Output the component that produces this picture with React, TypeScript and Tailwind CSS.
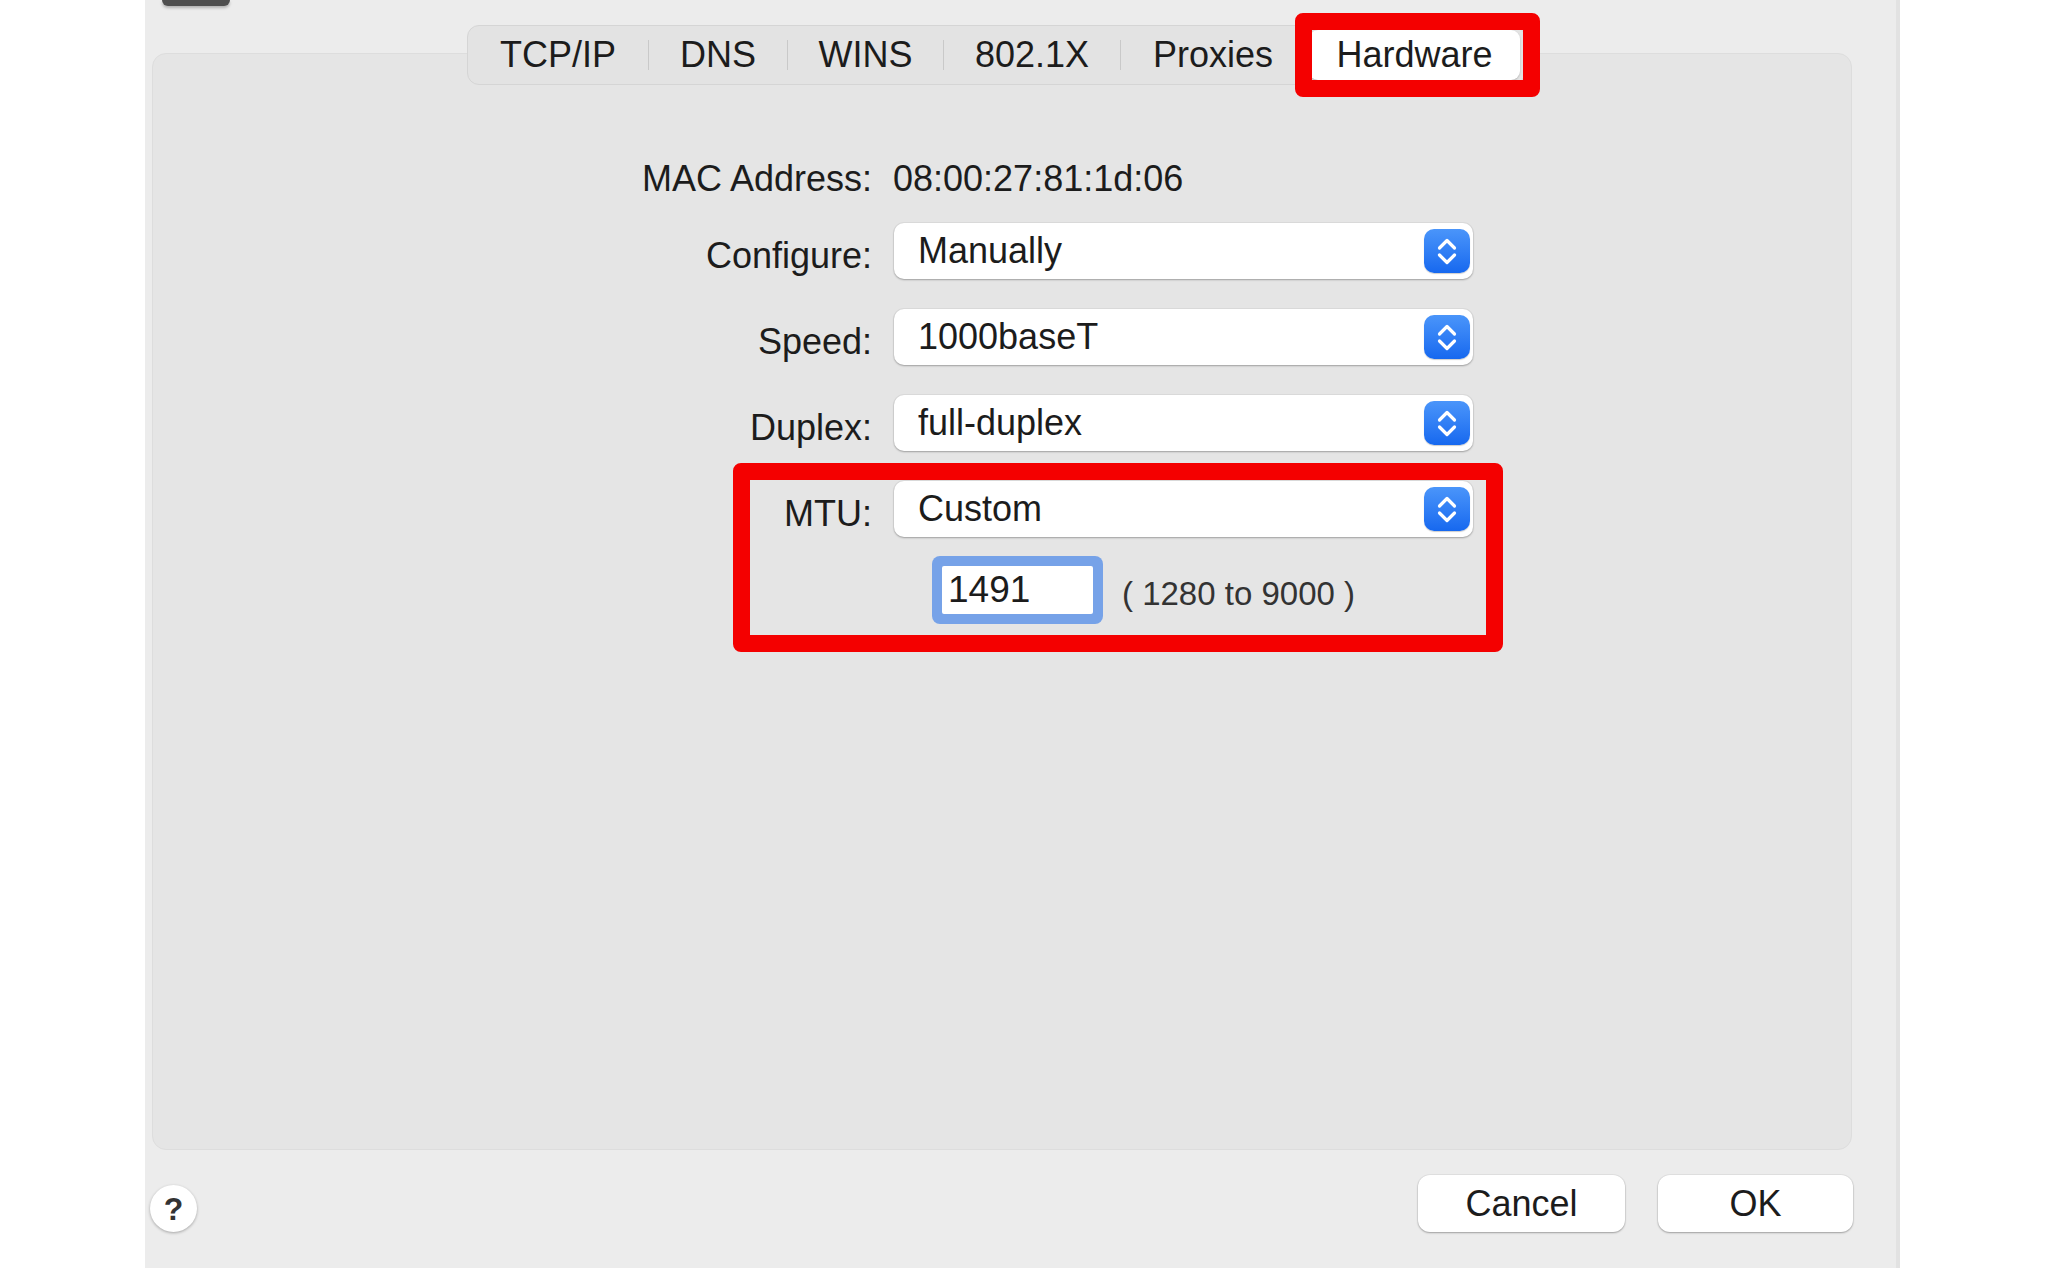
import React from 'react';

const tabs = [
  { label: 'TCP/IP', w: 'w-[180px]' },
  { label: 'DNS', w: 'w-[138px]' },
  { label: 'WINS', w: 'w-[155px]' },
  { label: '802.1X', w: 'w-[176px]' },
  { label: 'Proxies', w: 'w-[184px]' },
];

function Stepper() {
  return (
    <div className="flex h-[44px] w-[46px] items-center justify-center rounded-[10px] bg-gradient-to-b from-[#4a95fa] to-[#1668ef] shadow-[0_1px_1px_rgba(0,0,0,0.2)]">
      <svg width="46" height="44" viewBox="0 0 46 44" fill="none">
        <path d="M15.5 19 L23 11.5 L30.5 19" stroke="white" strokeWidth="3.2" strokeLinecap="round" strokeLinejoin="round" />
        <path d="M15.5 26 L23 33.5 L30.5 26" stroke="white" strokeWidth="3.2" strokeLinecap="round" strokeLinejoin="round" />
      </svg>
    </div>
  );
}

function PopupRow({ label, value, first }: { label: string; value: string; first?: boolean }) {
  return (
    <div className={`flex h-[56px] items-center ${first ? 'mt-[22px]' : 'mt-[30px]'}`}>
      <div className="mt-[10px] w-[719px] text-right leading-[44px]">{label}</div>
      <div className="ml-[22px] flex h-[56px] w-[579px] items-center justify-between rounded-[10px] bg-white pl-[24px] pr-[3px] leading-[44px] shadow-[0_1px_2px_rgba(0,0,0,0.28),0_0_0_1px_rgba(0,0,0,0.04)]">
        <span>{value}</span>
        <Stepper />
      </div>
    </div>
  );
}

export default function App() {
  return (
    <div
      className="h-[1268px] w-full overflow-hidden bg-white text-[36px] leading-[44px] text-[#1c1c1c]"
      style={{ fontFamily: '"Liberation Sans", Arial, sans-serif' }}
    >
      <div className="relative ml-[145px] flex h-[1268px] w-[1755px] flex-col border-r-[4px] border-[#e2e2e2] bg-[#ececec] pl-[7px] pt-[53px]">
        {/* bit of a control sticking out above */}
        <div className="absolute left-[17px] top-0 h-[6px] w-[68px] rounded-b-[8px] bg-[#4f4f4f] shadow-[0_2px_3px_rgba(0,0,0,0.25)]" />

        {/* main panel */}
        <div className="flex h-[1097px] w-[1700px] flex-col rounded-[14px] border border-[#dddddd] bg-[#e5e5e5]">
          {/* segmented tabs */}
          <div className="relative z-10 -mt-[29px] ml-[314px] flex h-[60px] w-[1058px] items-center rounded-[12px] border border-[#d5d5d5] bg-[#e3e3e3]">
            {tabs.map((t, i) => (
              <React.Fragment key={t.label}>
                {i > 0 && <div className="h-[30px] w-px bg-[#c9c9c9]" />}
                <div className={`${t.w} text-center leading-[58px]`}>{t.label}</div>
              </React.Fragment>
            ))}
            <div className="flex h-full flex-1 p-[4px]">
              <div className="flex flex-1 items-center justify-center rounded-[9px] bg-white shadow-[0_1px_2px_rgba(0,0,0,0.2)]">
                Hardware
              </div>
            </div>
          </div>

          {/* MAC */}
          <div className="mt-[72px] flex h-[44px] items-center">
            <div className="w-[719px] text-right">MAC Address:</div>
            <div className="ml-[21px]">08:00:27:81:1d:06</div>
          </div>

          <PopupRow label="Configure:" value="Manually" first />
          <PopupRow label="Speed:" value="1000baseT" />
          <PopupRow label="Duplex:" value="full-duplex" />
          <PopupRow label="MTU:" value="Custom" />

          <div className="mt-[19px] flex h-[68px] items-center">
            <div className="w-[719px]" />
            <div className="ml-[60px] h-[68px] w-[171px] rounded-[8px] bg-[#76a2e8] p-[10px]">
              <div className="flex h-full items-center rounded-[2px] bg-white pl-[6px] text-[37px]">1491</div>
            </div>
            <div className="ml-[19px] mt-[8px] text-[33px] text-[#333]">( 1280 to 9000 )</div>
          </div>
        </div>

        {/* footer */}
        <div className="mt-[25px] flex h-[57px] w-[1701px] items-start">
          <div className="-ml-[2px] mt-[10px] flex h-[47px] w-[47px] items-center justify-center rounded-full bg-white text-[32px] font-bold text-[#333] shadow-[0_1px_3px_rgba(0,0,0,0.3)]">
            ?
          </div>
          <div className="ml-auto flex gap-[33px]">
            <div className="flex h-[57px] w-[207px] items-center justify-center rounded-[12px] bg-white shadow-[0_1px_2px_rgba(0,0,0,0.3),0_0_0_1px_rgba(0,0,0,0.04)]">
              Cancel
            </div>
            <div className="flex h-[57px] w-[195px] items-center justify-center rounded-[12px] bg-white shadow-[0_1px_2px_rgba(0,0,0,0.3),0_0_0_1px_rgba(0,0,0,0.04)]">
              OK
            </div>
          </div>
        </div>

        {/* red annotation boxes */}
        <div className="absolute left-[1150px] top-[13px] z-20 h-[84px] w-[245px] rounded-[8px] border-[17px] border-[#f40000]" />
        <div className="absolute left-[588px] top-[463px] z-20 h-[189px] w-[770px] rounded-[8px] border-[17px] border-[#f40000]" />
      </div>
    </div>
  );
}
